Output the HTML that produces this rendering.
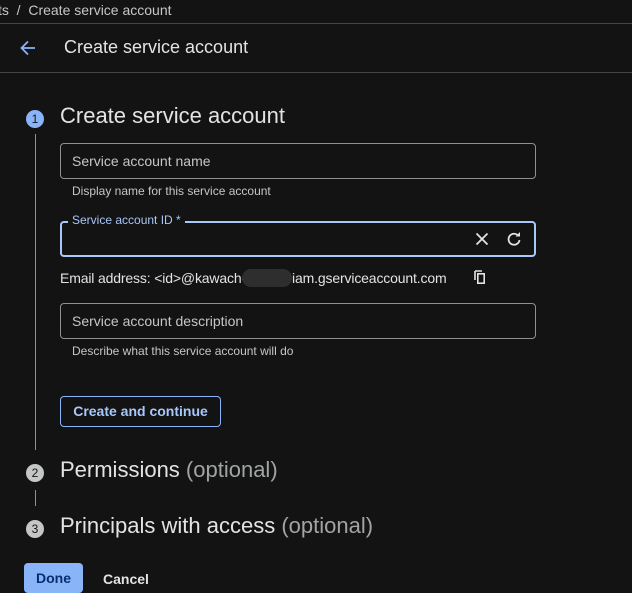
<!DOCTYPE html>
<html><head><style>
*{margin:0;padding:0;box-sizing:border-box}
body{width:632px;height:588px;background:#131313;color:#e3e3e3;font-family:"Liberation Sans",sans-serif;position:relative;overflow:hidden}
.a{position:absolute;white-space:nowrap}
.f{position:absolute;left:60px;width:476px;height:36px;border:1px solid #8e918f;border-radius:4px}
.c{position:absolute;width:18px;height:18px;border-radius:50%;font-size:12px;text-align:center;line-height:18px;color:#131313;left:26px}
</style></head><body>
<div class="a" style="left:-2px;top:2px;font-size:14px;color:#c4c7c5">ts &nbsp;/ &nbsp;Create service account</div>
<div class="a" style="left:0;top:23px;width:632px;height:1px;background:#444"></div>
<svg class="a" style="left:18px;top:38px" width="20" height="20" viewBox="0 0 20 20"><path d="M17 10H4M10 3.5L3.5 10 10 16.5" stroke="#8ab4f8" stroke-width="1.8" fill="none"/></svg>
<div class="a" style="left:64px;top:37px;font-size:18px;color:#e3e3e3">Create service account</div>
<div class="a" style="left:0;top:72px;width:632px;height:1px;background:#444"></div>
<div class="c" style="top:110px;background:#8ab4f8">1</div>
<div class="a" style="left:35px;top:134px;width:1px;height:316px;background:#8e918f"></div>
<div class="a" style="left:60px;top:103px;font-size:22px">Create service account</div>
<div class="f" style="top:143px"></div>
<div class="a" style="left:72px;top:153px;font-size:14px;color:#c4c7c5">Service account name</div>
<div class="a" style="left:72px;top:184px;font-size:12px;color:#c4c7c5">Display name for this service account</div>
<div class="f" style="top:221px;border:2px solid #a8c7fa"></div>
<div class="a" style="left:68px;top:213px;font-size:12px;color:#a8c7fa;background:#131313;padding:0 4px">Service account ID *</div>
<svg class="a" style="left:474px;top:231px" width="16" height="16" viewBox="0 0 16 16"><path d="M2.5 2.5l11 11M13.5 2.5l-11 11" stroke="#e3e3e3" stroke-width="1.8"/></svg>
<svg class="a" style="left:506px;top:231px" width="16" height="16" viewBox="0 0 16 16"><path d="M12.5 5A5.5 5.5 0 1 0 13.5 9" stroke="#e3e3e3" stroke-width="1.8" fill="none"/><path d="M9.5 5.5H14V1z" fill="#e3e3e3"/></svg>
<div class="a" style="left:60px;top:269px;font-size:14px;letter-spacing:-0.15px">Email address: &lt;id&gt;@kawach-<span style="display:inline-block;width:50px;height:18px;background:#2e2e2e;border-radius:9px;vertical-align:-4px;margin-left:-4px"></span>iam.gserviceaccount.com</div>
<svg class="a" style="left:473px;top:269px" width="14" height="16" viewBox="0 0 14 16"><path d="M2 2v9M2 2h7" stroke="#e3e3e3" stroke-width="1.6" fill="none"/><rect x="4.8" y="4.8" width="6.4" height="9.4" stroke="#e3e3e3" stroke-width="1.6" fill="none"/></svg>
<div class="f" style="top:303px"></div>
<div class="a" style="left:72px;top:313px;font-size:14px;color:#c4c7c5">Service account description</div>
<div class="a" style="left:72px;top:344px;font-size:12px;color:#c4c7c5">Describe what this service account will do</div>
<div class="a" style="left:60px;top:396px;width:161px;height:31px;border:1px solid #8ab4f8;border-radius:4px;color:#a8c7fa;font-size:14px;font-weight:bold;text-align:center;line-height:29px">Create and continue</div>
<div class="c" style="top:464px;background:#c4c7c5">2</div>
<div class="a" style="left:60px;top:457px;font-size:22px">Permissions <span style="color:#a0a4a2">(optional)</span></div>
<div class="a" style="left:35px;top:490px;width:1px;height:16px;background:#8e918f"></div>
<div class="c" style="top:520px;background:#c4c7c5">3</div>
<div class="a" style="left:60px;top:513px;font-size:22px">Principals with access <span style="color:#a0a4a2">(optional)</span></div>
<div class="a" style="left:24px;top:563px;width:59px;height:30px;background:#8ab4f8;border-radius:4px;color:#062e6f;font-size:14px;font-weight:bold;text-align:center;line-height:30px">Done</div>
<div class="a" style="left:103px;top:571px;font-size:14px;font-weight:bold;color:#e3e3e3">Cancel</div>
</body></html>
